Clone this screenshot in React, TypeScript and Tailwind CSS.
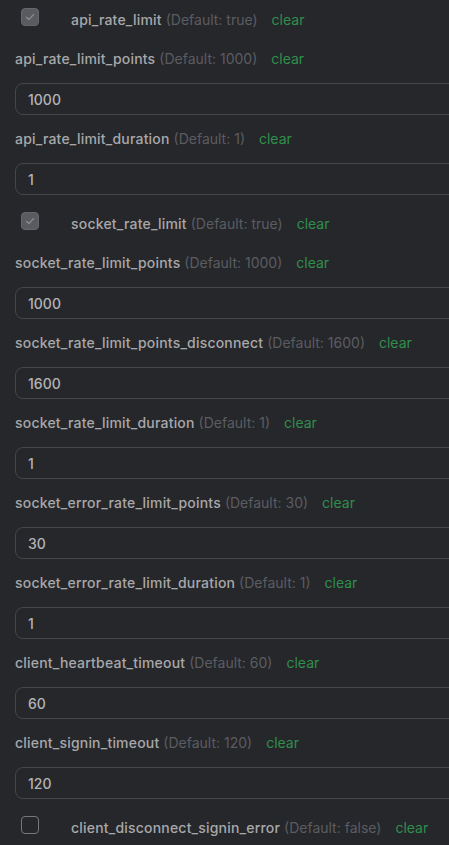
import React from "react";

type Item =
  | { kind: "check"; name: string; def: string; checked: boolean }
  | { kind: "input"; name: string; def: string; value: string };

const items: Item[] = [
  { kind: "check", name: "api_rate_limit", def: "true", checked: true },
  { kind: "input", name: "api_rate_limit_points", def: "1000", value: "1000" },
  { kind: "input", name: "api_rate_limit_duration", def: "1", value: "1" },
  { kind: "check", name: "socket_rate_limit", def: "true", checked: true },
  { kind: "input", name: "socket_rate_limit_points", def: "1000", value: "1000" },
  { kind: "input", name: "socket_rate_limit_points_disconnect", def: "1600", value: "1600" },
  { kind: "input", name: "socket_rate_limit_duration", def: "1", value: "1" },
  { kind: "input", name: "socket_error_rate_limit_points", def: "30", value: "30" },
  { kind: "input", name: "socket_error_rate_limit_duration", def: "1", value: "1" },
  { kind: "input", name: "client_heartbeat_timeout", def: "60", value: "60" },
  { kind: "input", name: "client_signin_timeout", def: "120", value: "120" },
  { kind: "check", name: "client_disconnect_signin_error", def: "false", checked: false },
];

function Label({ name, def }: { name: string; def: string }) {
  return (
    <span className="leading-5 whitespace-nowrap">
      <span className="text-[#a8a8aa] font-medium tracking-[0.2px]">{name}</span>
      <span className="text-[#5b5c61]"> (Default: {def})</span>
      <span className="text-[#2f8f4b] ml-[14px]">clear</span>
    </span>
  );
}

export default function App() {
  return (
    <div
      className="w-[449px] min-h-[845px] overflow-hidden bg-[#26272b] pt-[5px] text-[14px]"
      style={{ fontFamily: "Inter, 'Noto Sans', sans-serif" }}
    >
      <div className="flex flex-col gap-[14px] w-[500px]">
        {items.map((it) =>
          it.kind === "check" ? (
            <div key={it.name} className="h-[30px] flex items-start">
              <div
                className={
                  "ml-[21px] mt-[3px] w-[18px] h-[18px] rounded-[4px] border flex items-center justify-center " +
                  (it.checked
                    ? "bg-[#5a5b60] border-[#66676b]"
                    : "bg-transparent border-[#77787c]")
                }
              >
                {it.checked && (
                  <svg width="12" height="12" viewBox="0 0 12 12" fill="none">
                    <path
                      d="M2.5 6.3 L4.9 8.6 L9.5 3.6"
                      stroke="#8c8d91"
                      strokeWidth="1.3"
                      strokeLinecap="round"
                      strokeLinejoin="round"
                    />
                  </svg>
                )}
              </div>
              <div className="ml-[32px] mt-[4px]">
                <Label name={it.name} def={it.def} />
              </div>
            </div>
          ) : (
            <div key={it.name} className="flex flex-col gap-[14px] pl-[15px]">
              <div className="h-5 flex items-center">
                <Label name={it.name} def={it.def} />
              </div>
              <div className="h-8 w-[480px] rounded-[8px] border border-[#45464a] px-3 flex items-center text-[#b3b3b5] font-medium">
                {it.value}
              </div>
            </div>
          )
        )}
      </div>
    </div>
  );
}
